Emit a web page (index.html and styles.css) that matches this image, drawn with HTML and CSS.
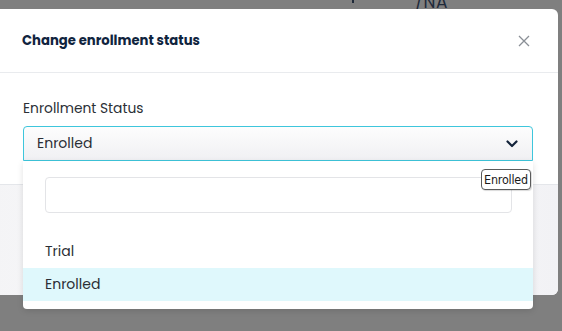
FILE: index.html
```html
<!DOCTYPE html>
<html>
<head>
    <title>Change enrollment status</title>
    <meta name="viewport" content="width=device-width, initial-scale=1.0">
    <link rel="stylesheet" href="styles.css">
</head>
<body>
    <div class="page">
        <span class="page-mark"></span>
        <span class="page-na">/NA</span>
    </div>

    <div class="backdrop">
        <div class="modal">
            <div class="modal-header">
                <h2>Change enrollment status</h2>
                <button class="close" type="button" aria-label="Close">
                    <svg width="12" height="12" viewBox="0 0 12 12"><path d="M1 1L11 11M11 1L1 11" stroke="#8a8f96" stroke-width="1.3" fill="none"/></svg>
                </button>
            </div>

            <div class="modal-body">
                <label class="field-label">Enrollment Status</label>
                <div class="select-wrap">
                    <div class="select">
                        <span>Enrolled</span>
                        <svg width="14" height="14" viewBox="0 0 14 14"><path d="M2.5 4.5L7 9L11.5 4.5" stroke="#13233a" stroke-width="2.2" fill="none" stroke-linecap="round" stroke-linejoin="round"/></svg>
                    </div>
                    <div class="dropdown">
                        <div class="search"></div>
                        <ul class="options">
                            <li>Trial</li>
                            <li class="active">Enrolled</li>
                        </ul>
                    </div>
                    <div class="tooltip">Enrolled</div>
                </div>
            </div>

            <div class="modal-footer"></div>
        </div>
    </div>
</body>
</html>
```

FILE: styles.css
```css
body {
    margin: 0;
    background: #7f7f7f;
    font-family: "Poppins", "Lato", "Noto Sans", sans-serif;
    overflow: hidden;
    height: 331px;
}
.page {
    height: 9px;
    position: relative;
}
.page-mark {
    position: absolute;
    left: 352px;
    top: 0;
    width: 2px;
    height: 3px;
    background: #1f2a3a;
}
.page-na {
    position: absolute;
    left: 415px;
    top: -11px;
    font-size: 17px;
    color: #1f2a3a;
    letter-spacing: 0.5px;
}
.backdrop {
    position: absolute;
    top: 9px;
    left: -10px;
}
.modal {
    width: 568px;
    height: 286px;
    background: #fff;
    border-radius: 0 6px 6px 0;
    display: flex;
    flex-direction: column;
}
.modal-header {
    height: 63px;
    border-bottom: 1px solid #e9ebee;
    display: flex;
    align-items: center;
    justify-content: space-between;
    padding: 0 28px 0 32px;
}
.modal-header h2 {
    margin: 0;
    font-size: 13.2px;
    font-weight: 700;
    color: #10243e;
}
.close {
    border: 0;
    background: none;
    padding: 0;
    display: flex;
}
.modal-body {
    padding: 26px 25px 0 33px;
    height: 111px;
    box-sizing: border-box;
}
.field-label {
    display: block;
    font-size: 13.8px;
    color: #2b2f36;
    margin-bottom: 7px;
    line-height: 20px;
}
.select-wrap {
    position: relative;
}
.select {
    height: 35px;
    box-sizing: border-box;
    border: 1px solid #3ec6dc;
    border-radius: 4px 4px 0 0;
    background: linear-gradient(#fdfdfd, #f0f0f3);
    display: flex;
    align-items: center;
    justify-content: space-between;
    padding: 0 13px 0 13px;
    font-size: 14px;
    color: #2a2e35;
}
.dropdown {
    position: absolute;
    left: 0;
    right: 0;
    top: 35px;
    height: 148px;
    background: #fff;
    border-radius: 0 0 4px 4px;
    box-shadow: 0 2px 6px rgba(0, 0, 0, 0.12);
    padding-top: 16px;
    box-sizing: border-box;
    z-index: 2;
}
.search {
    height: 36px;
    box-sizing: border-box;
    margin: 0 21px 0 22px;
    border: 1px solid #e3e4e7;
    border-radius: 4px;
}
.options {
    list-style: none;
    margin: 22px 0 0;
    padding: 0;
}
.options li {
    height: 33px;
    line-height: 33px;
    padding-left: 22px;
    font-size: 14px;
    color: #2a2e35;
}
.options li.active {
    background: #dff8fc;
}
.tooltip {
    position: absolute;
    left: 458px;
    top: 43px;
    width: 50px;
    height: 21px;
    box-sizing: border-box;
    z-index: 3;
    background: #fff;
    border: 1px solid #5a5a5a;
    border-radius: 4px;
    text-align: center;
    line-height: 19px;
    font-family: "DejaVu Sans Condensed", "Liberation Sans Narrow", sans-serif;
    font-size: 12.4px;
    letter-spacing: -0.2px;
    color: #1a1a1a;
    box-shadow: 1px 1px 1px rgba(0, 0, 0, 0.15);
}
.modal-footer {
    flex: 1;
    border-top: 1px solid #e4e6ea;
    background: linear-gradient(90deg, #f4f4f6, #fbfbfc 50%, #f2f2f5);
    border-radius: 0 0 6px 0;
}
```
